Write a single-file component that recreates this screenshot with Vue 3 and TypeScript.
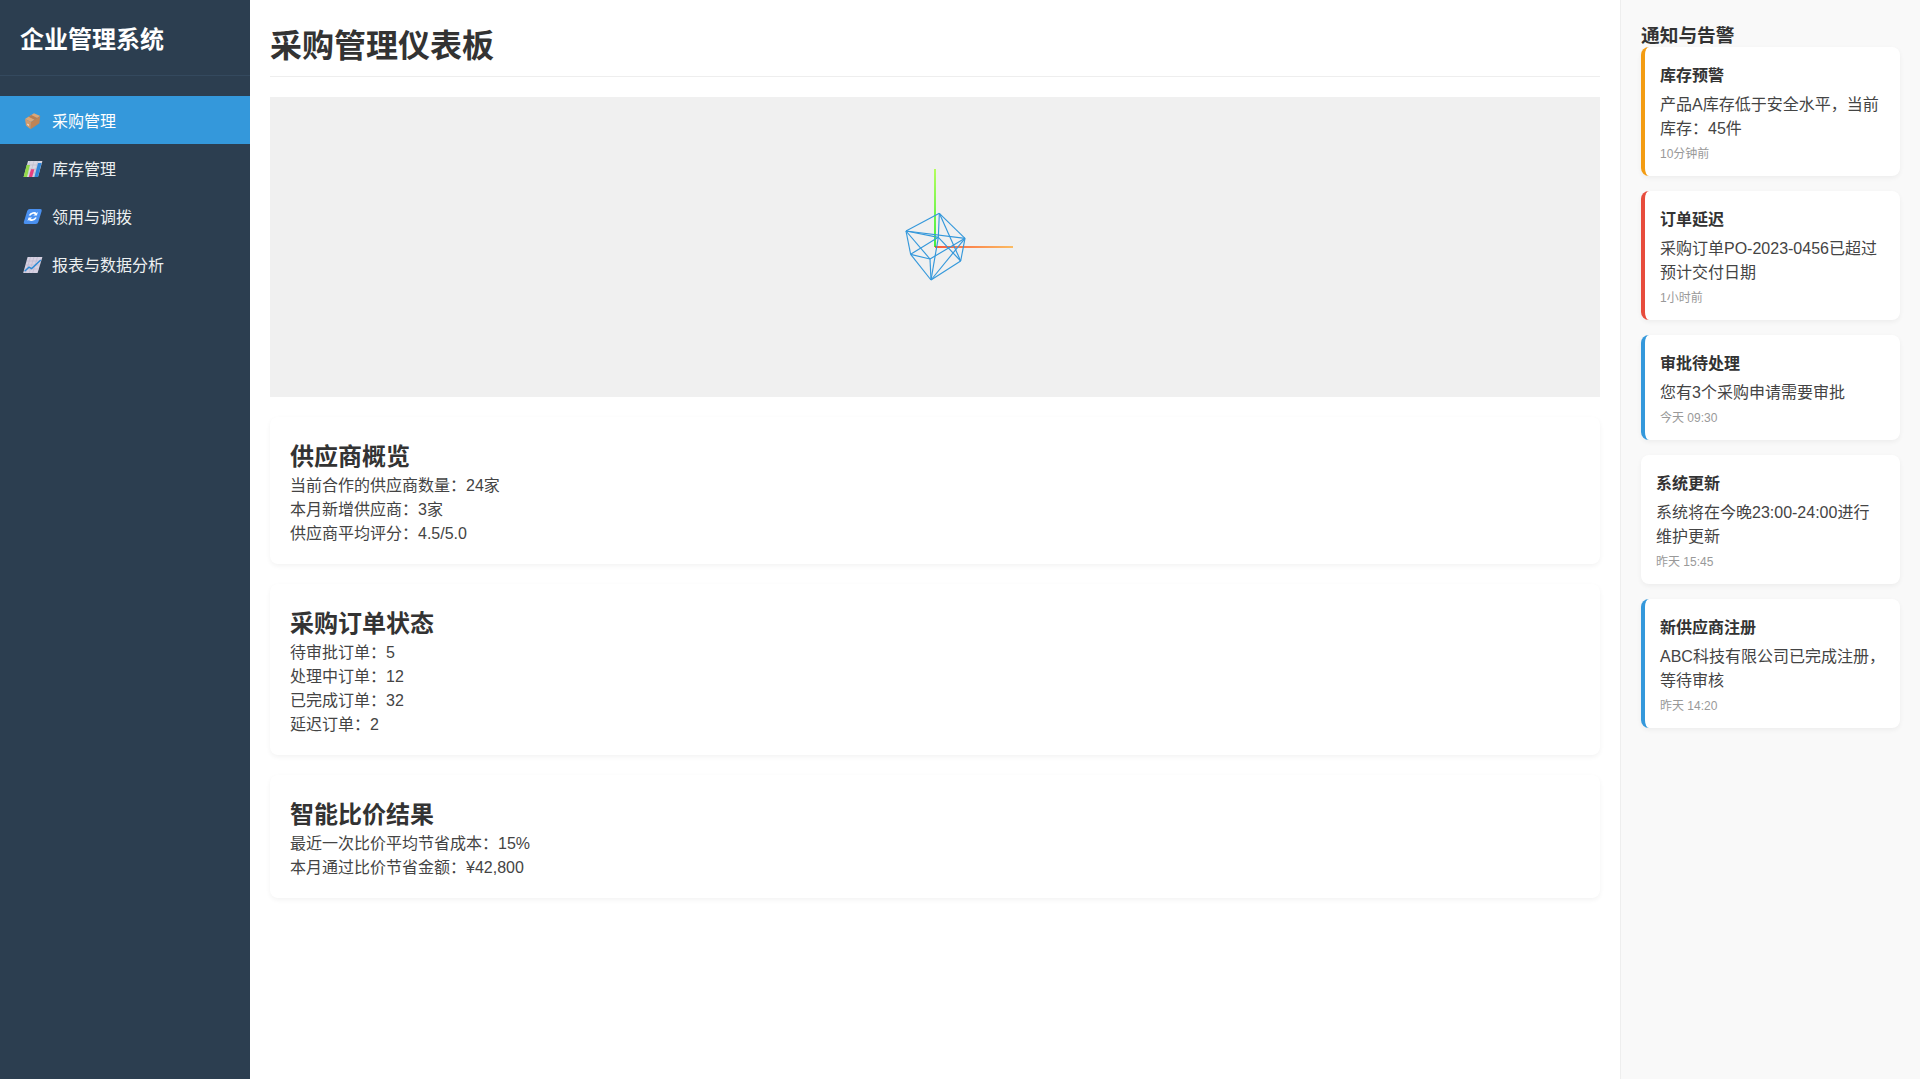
<script setup lang="ts">
const nav = [
  { icon: 'box', label: '采购管理', active: true },
  { icon: 'bars', label: '库存管理', active: false },
  { icon: 'sync', label: '领用与调拨', active: false },
  { icon: 'trend', label: '报表与数据分析', active: false },
]
const cards = [
  { title: '供应商概览', lines: ['当前合作的供应商数量：24家', '本月新增供应商：3家', '供应商平均评分：4.5/5.0'] },
  { title: '采购订单状态', lines: ['待审批订单：5', '处理中订单：12', '已完成订单：32', '延迟订单：2'] },
  { title: '智能比价结果', lines: ['最近一次比价平均节省成本：15%', '本月通过比价节省金额：¥42,800'] },
]
const alerts = [
  { kind: 'warn', title: '库存预警', text: '产品A库存低于安全水平，当前库存：45件', time: '10分钟前' },
  { kind: 'danger', title: '订单延迟', text: '采购订单PO-2023-0456已超过预计交付日期', time: '1小时前' },
  { kind: 'info', title: '审批待处理', text: '您有3个采购申请需要审批', time: '今天 09:30' },
  { kind: 'plain', title: '系统更新', text: '系统将在今晚23:00-24:00进行维护更新', time: '昨天 15:45' },
  { kind: 'info', title: '新供应商注册', text: 'ABC科技有限公司已完成注册，等待审核', time: '昨天 14:20' },
]
type P = [number, number]
const v: Record<string, P> = {
  A: [178, 190], B: [78, 243], C: [255, 265], D: [153, 390],
  E: [92, 313], F: [150, 327], G: [242, 333], H: [175, 262],
}
const pairs = ['AC','CG','GD','DE','EB','BA','FB','FC','FD','HA','HG','HE','BC','CD','FE','AG','HB','HD']
const map = (p: P): P => [610 + p[0] / 3, 53 + p[1] / 3]
const edges = pairs.map((s) => {
  const a = map(v[s[0]])
  const b = map(v[s[1]])
  return { x1: a[0], y1: a[1], x2: b[0], y2: b[1] }
})
</script>

<template>
  <div class="app">
    <aside class="sidebar">
      <div class="brand"><h2>企业管理系统</h2></div>
      <ul class="nav">
        <li v-for="n in nav" :key="n.label" :class="{ active: n.active }">
          <svg class="ico" width="20" height="20" viewBox="0 0 20 20">
            <g v-if="n.icon === 'box'">
              <path d="M2 9 11 3.2 17.2 6 8 12Z" fill="#dca776" />
              <path d="M2 9 8 12 7.6 19.2 3 15.5Z" fill="#d39a6b" />
              <path d="M8 12 17.2 6 16.4 13.2 7.6 19.2Z" fill="#bf8455" />
              <path d="M5.5 6.7 11.5 9.7 14.3 7.9 8.3 4.9Z" fill="#a8714a" opacity=".75" />
              <path d="M4 13.5 6 14.5 6 16 4.3 15Z" fill="#f0dcc6" />
            </g>
            <g v-else-if="n.icon === 'bars'">
              <path d="M5 3H19.4L15 19H0.6Z" fill="#d8d6e2" />
              <path d="M7 3 2.6 19M11 3 6.6 19M15 3 10.6 19M4 7H18M3 11H17M2 15H16" stroke="#bdbbcb" stroke-width=".6" fill="none" />
              <path d="M3.6 7H7L4 19H0.6Z" fill="#93d94a" />
              <path d="M8 11.2H11.4L9.2 19H5.8Z" fill="#e8407f" />
              <path d="M15 5H18.6L15 19H11.4Z" fill="#2f86d8" />
            </g>
            <g v-else-if="n.icon === 'sync'" transform="translate(9.75 10.5) skewX(-17) translate(-9.75 -10.5)">
              <rect x="2.5" y="3" width="14.5" height="15" rx="2" fill="#4a90f0" />
              <path d="M6.2 9.6A3.6 3.6 0 0 1 12.2 8" stroke="#fff" stroke-width="1.8" fill="none" />
              <path d="M13.6 6V9.6H10Z" fill="#fff" />
              <path d="M13.3 11.4A3.6 3.6 0 0 1 7.3 13" stroke="#fff" stroke-width="1.8" fill="none" />
              <path d="M5.9 15V11.4H9.5Z" fill="#fff" />
            </g>
            <g v-else>
              <path d="M4.6 3H19.4L14.6 19H0.2Z" fill="#d7d1e2" />
              <path d="M7.5 3 2.7 19M11 3 6.2 19M14.5 3 9.7 19M4 7H18M3 11H17M1.8 15H15.8" stroke="#bcb5cc" stroke-width=".6" fill="none" />
              <path d="M1.6 17.2 6 13.2 8.6 14.6 17.8 6" stroke="#2d8ad6" stroke-width="1.4" fill="none" />
            </g>
          </svg>
          <span>{{ n.label }}</span>
        </li>
      </ul>
    </aside>
    <main class="main">
      <h1>采购管理仪表板</h1>
      <div class="scene">
        <svg width="1330" height="300" viewBox="0 0 1330 300">
          <defs>
            <linearGradient id="gx" gradientUnits="userSpaceOnUse" x1="665" y1="150" x2="743" y2="150">
              <stop offset="0" stop-color="#ff2a00" /><stop offset="1" stop-color="#ffaa33" />
            </linearGradient>
            <linearGradient id="gy" gradientUnits="userSpaceOnUse" x1="665" y1="150" x2="665" y2="72">
              <stop offset="0" stop-color="#22ee22" /><stop offset="1" stop-color="#aaff44" />
            </linearGradient>
          </defs>
          <line x1="665" y1="150" x2="665" y2="72" stroke="url(#gy)" stroke-width="1.7" />
          <line x1="665" y1="150" x2="743" y2="150" stroke="url(#gx)" stroke-width="1.7" />
          <line v-for="(e, i) in edges" :key="i" :x1="e.x1" :y1="e.y1" :x2="e.x2" :y2="e.y2" class="edge" />
        </svg>
      </div>
      <section v-for="c in cards" :key="c.title" class="card">
        <h2>{{ c.title }}</h2>
        <p v-for="l in c.lines" :key="l">{{ l }}</p>
      </section>
    </main>
    <aside class="panel">
      <h3>通知与告警</h3>
      <div v-for="a in alerts" :key="a.title" class="alert" :class="a.kind">
        <div class="a-title">{{ a.title }}</div>
        <div class="a-text">{{ a.text }}</div>
        <div class="a-time">{{ a.time }}</div>
      </div>
    </aside>
  </div>
</template>

<style>
html, body { margin: 0; padding: 0; }
</style>

<style scoped>
* { box-sizing: border-box; }
.app {
  display: flex;
  height: 1079px;
  overflow: hidden;
  color: #333;
  line-height: 1.5;
  font-family: "Liberation Sans", "Noto Sans CJK SC", sans-serif;
  background: #fff;
}
.sidebar { width: 250px; flex: none; background: #2c3e50; color: #ecf0f1; }
.brand { padding: 22px 20px 17px; border-bottom: 1px solid #34495e; }
.brand h2 { margin: 0; font-size: 24px; color: #fff; }
.nav { list-style: none; margin: 0; padding: 20px 0 0; }
.nav li { display: flex; align-items: center; height: 48px; padding: 0 20px; font-size: 16px; color: #ecf0f1; }
.nav li span { padding-top: 4px; }
.nav li.active { background: #3498db; color: #fff; }
.ico { display: block; flex: none; margin: 0 9px 0 3px; }
.main { flex: 1; min-width: 0; padding: 20px; }
.main h1 { margin: 0 0 20px; font-size: 32px; padding: 2px 0 6px; border-bottom: 1px solid #eee; }
.scene { height: 300px; background: #f0f0f0; margin-bottom: 20px; }
.scene svg { display: block; }
.edge { stroke: #3498db; stroke-width: 1.15; }
.card { background: #fff; border-radius: 8px; padding: 20px 20px 18px; margin-bottom: 20px; box-shadow: 0 2px 5px rgba(0,0,0,.05); }
.card h2 { margin: 0; font-size: 24px; padding-top: 3px; line-height: 34px; }
.card p { margin: 0; font-size: 16px; color: #444; }
.panel { width: 300px; flex: none; background: #f9f9f9; border-left: 1px solid #eee; padding: 20px; }
.panel h3 { margin: 0; font-size: 18.72px; padding-top: 4px; line-height: 23px; }
.alert { background: #fff; border-radius: 8px; padding: 17px 15px 13px; margin-bottom: 15px; box-shadow: 0 2px 5px rgba(0,0,0,.05); }
.alert.warn { border-left: 4px solid #f39c12; }
.alert.danger { border-left: 4px solid #e74c3c; }
.alert.info { border-left: 4px solid #3498db; }
.a-title { font-weight: 700; font-size: 16px; margin-bottom: 5px; }
.a-text { font-size: 16px; margin-bottom: 4px; color: #444; }
.a-time { font-size: 12px; color: #999; }
</style>
